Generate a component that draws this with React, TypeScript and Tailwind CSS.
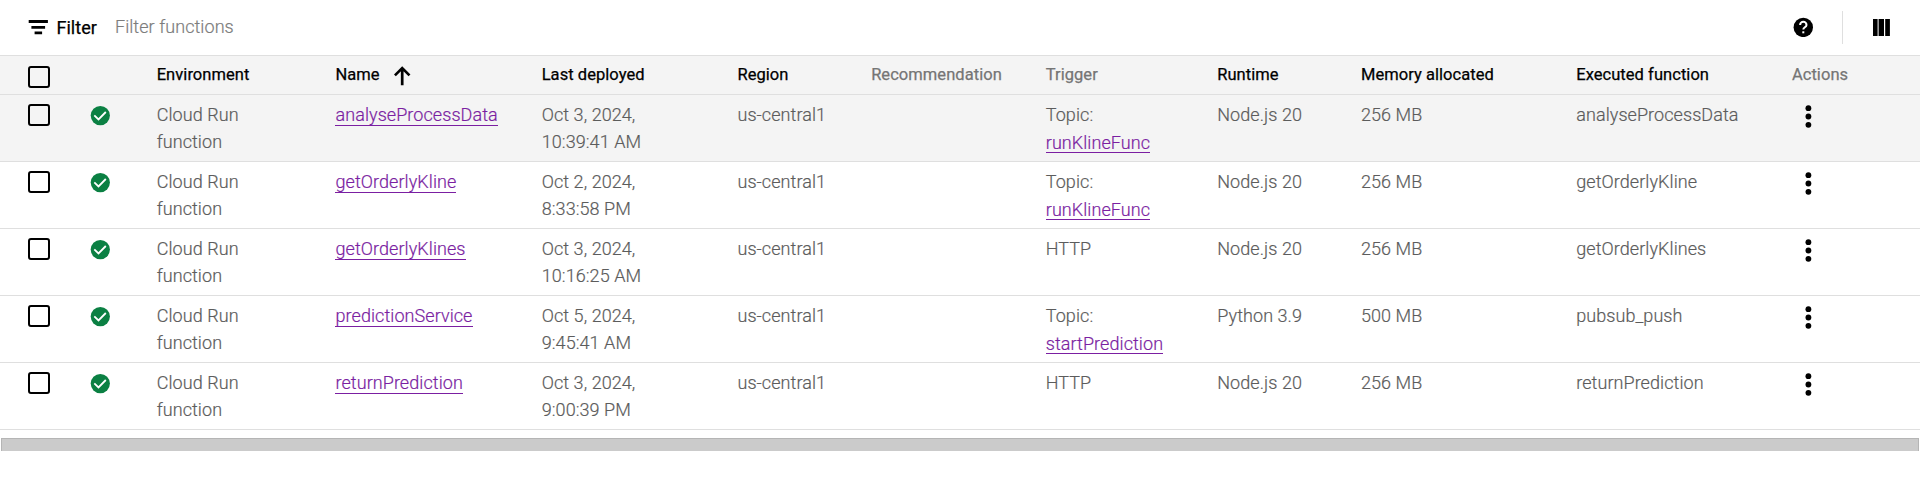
type Row = {
  name: string;
  deployed: [string, string];
  topic?: string;
  runtime: string;
  memory: string;
  executed: string;
};

const rows: Row[] = [
  { name: 'analyseProcessData', deployed: ['Oct 3, 2024,', '10:39:41 AM'], topic: 'runKlineFunc', runtime: 'Node.js 20', memory: '256 MB', executed: 'analyseProcessData' },
  { name: 'getOrderlyKline', deployed: ['Oct 2, 2024,', '8:33:58 PM'], topic: 'runKlineFunc', runtime: 'Node.js 20', memory: '256 MB', executed: 'getOrderlyKline' },
  { name: 'getOrderlyKlines', deployed: ['Oct 3, 2024,', '10:16:25 AM'], runtime: 'Node.js 20', memory: '256 MB', executed: 'getOrderlyKlines' },
  { name: 'predictionService', deployed: ['Oct 5, 2024,', '9:45:41 AM'], topic: 'startPrediction', runtime: 'Python 3.9', memory: '500 MB', executed: 'pubsub_push' },
  { name: 'returnPrediction', deployed: ['Oct 3, 2024,', '9:00:39 PM'], runtime: 'Node.js 20', memory: '256 MB', executed: 'returnPrediction' },
];

const GRID =
  'grid grid-cols-[62px_66.7px_178.8px_206.2px_195.8px_133.7px_174.6px_171.5px_143.7px_215.3px_215.7px_128px] pl-7 border-b border-[#dfdfdf]';

function Checkbox() {
  return <span className="block size-[22px] rounded-[3px] border-2 border-black" />;
}

function StatusOk() {
  return (
    <svg className="mt-[11px] size-5" viewBox="0 0 20 20">
      <circle cx="10.3" cy="9.6" r="9.6" fill="#0b8043" />
      <path d="M4.3 9.4l4.2 4.1 7.3-7.5" fill="none" stroke="#fff" strokeWidth="1.8" />
    </svg>
  );
}

function MoreVert() {
  return (
    <svg className="ml-[10px] mt-[9px] h-6 w-3" viewBox="0 0 12 24">
      <circle cx="6.4" cy="4.2" r="2.9" />
      <circle cx="6.4" cy="12.5" r="2.9" />
      <circle cx="6.4" cy="20.8" r="2.9" />
    </svg>
  );
}

function Toolbar() {
  return (
    <div className="flex h-[55px] items-start">
      <svg className="ml-7 mt-[19px] h-4 w-5" viewBox="0 0 20 16">
        <path d="M.7 1h19.2v2.9H.7zM3.4 7h13.7v2.8H3.4zM6.6 12.6h7.5v2.6H6.6z" />
      </svg>
      <span className="ml-[8.4px] mt-[14px] text-lg leading-[27px] font-normal tracking-[0.05px] text-black [-webkit-text-stroke:0.25px]">Filter</span>
      <span className="ml-[18px] mt-[13px] text-lg leading-[27px] font-light tracking-[0.07px] text-[#7c7c7c] [-webkit-text-stroke:0.2px]">Filter functions</span>
      <div className="ml-auto flex pr-[29px]">
        <svg className="mt-[17px] size-5" viewBox="0 0 20 20">
          <circle cx="10.3" cy="10.4" r="9.7" />
          <path
            d="M7.1 7.9a3.2 3.2 0 0 1 6.4 0c0 2.3-3.2 2.5-3.2 4.7"
            fill="none"
            stroke="#fff"
            strokeWidth="2"
          />
          <path d="M9.3 14.3h2v2h-2z" fill="#fff" />
        </svg>
        <span className="ml-[29px] mt-[11px] h-[33px] w-px bg-[#dfdfdf]" />
        <svg className="ml-[30px] mt-[19px] size-[18px]" viewBox="0 0 18 18">
          <path d="M0 0h4.6v17H0zM5.6 0h5.4v17H5.6zM12.2 0h4.7v17h-4.7z" />
        </svg>
      </div>
    </div>
  );
}

function HeaderRow() {
  return (
    <div
      className={`${GRID} h-10 border-t bg-[#f4f4f4] pt-[7px] text-[16.5px] leading-[24px] font-normal tracking-[0.05px] text-black [-webkit-text-stroke:0.25px]`}
    >
      <div className="pt-[3px]"><Checkbox /></div>
      <div />
      <div>Environment</div>
      <div className="flex">
        Name
        <svg className="ml-[14px] mt-[3px] h-5 w-[17px]" viewBox="0 0 17 20">
          <path d="M8.2 19.2V2.3M.9 9.4l7.3-7.3 7.3 7.3" fill="none" stroke="#000" strokeWidth="2.7" />
        </svg>
      </div>
      <div>Last deployed</div>
      <div>Region</div>
      <div className="text-[#757575]">Recommendation</div>
      <div className="text-[#757575]">Trigger</div>
      <div>Runtime</div>
      <div>Memory allocated</div>
      <div>Executed function</div>
      <div className="text-[#757575]">Actions</div>
    </div>
  );
}

function FunctionRow({ row, shaded }: { row: Row; shaded: boolean }) {
  return (
    <div
      className={`${GRID} h-[67px] text-lg leading-[27px] font-light tracking-[0.07px] text-[#5c5c5c] [-webkit-text-stroke:0.2px] ${shaded ? 'bg-[#f4f4f4]' : ''}`}
    >
      <div className="pt-[9px]"><Checkbox /></div>
      <div><StatusOk /></div>
      <div className="pt-[6px]">Cloud Run<br />function</div>
      <div className="pt-[6px]">
        <a className="border-b border-[#7b1fa2] text-[#7b1fa2]">{row.name}</a>
      </div>
      <div className="pt-[6px]">{row.deployed[0]}<br />{row.deployed[1]}</div>
      <div className="pt-[6px]">us-central1</div>
      <div />
      <div className="flex flex-col items-start pt-[6px]">
        <span>{row.topic ? 'Topic:' : 'HTTP'}</span>
        {row.topic && (
          <a className="mt-[5px] block border-b border-[#7b1fa2] leading-[19px] text-[#7b1fa2]">{row.topic}</a>
        )}
      </div>
      <div className="pt-[6px]">{row.runtime}</div>
      <div className="pt-[6px]">{row.memory}</div>
      <div className="pt-[6px]">{row.executed}</div>
      <div><MoreVert /></div>
    </div>
  );
}

export default function App() {
  return (
    <div className="h-[497px] w-[1920px] overflow-hidden bg-white font-['Roboto',sans-serif]">
      <Toolbar />
      <HeaderRow />
      {rows.map((row, i) => (
        <FunctionRow key={row.name} row={row} shaded={i === 0} />
      ))}
      <div className="mx-px mt-2 h-[13px] border-x border-t border-[#b5b5b5] bg-[#cbcbcb]" />
    </div>
  );
}
